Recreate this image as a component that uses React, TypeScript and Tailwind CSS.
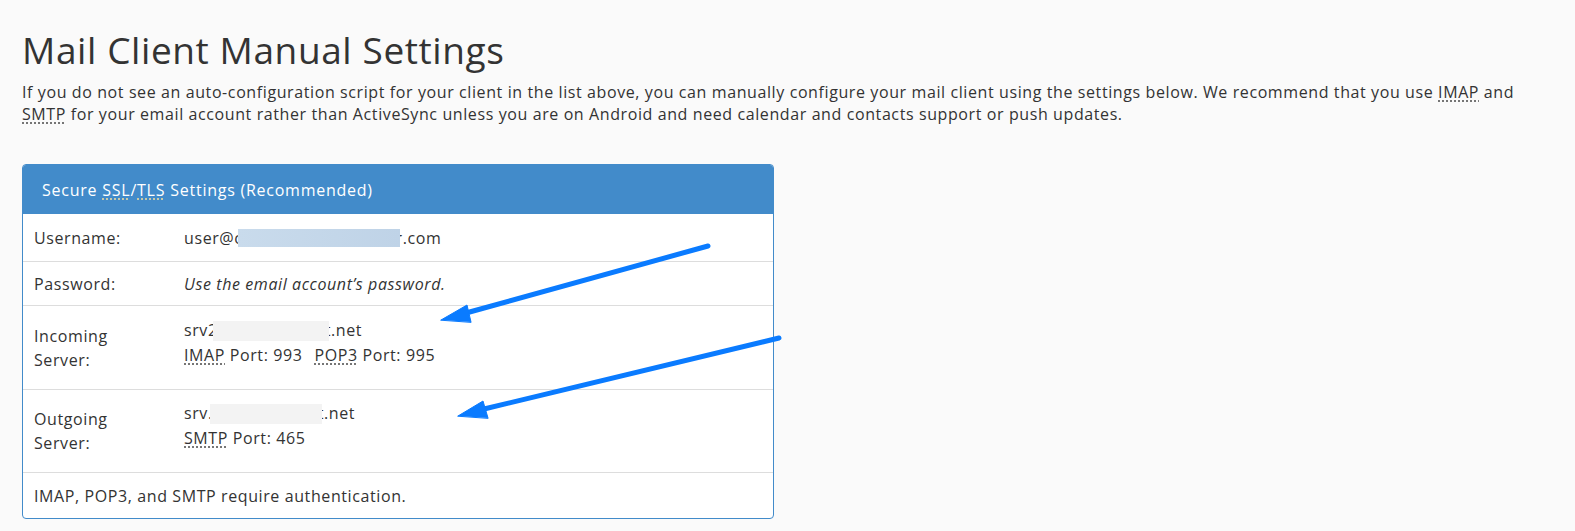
export default function App() {
  const abbr = "underline decoration-dotted decoration-[#555] underline-offset-[3px]";
  return (
    <div className="relative min-h-[531px] bg-[#fafafa] text-[#333] font-['Open_Sans',sans-serif] tracking-[0.6px] px-[22px] pt-[26px]">
      <h1 className="text-[37px] leading-[48px] font-normal text-[#333] tracking-[0.6px]">Mail Client Manual Settings</h1>
      <p className="text-[16px] leading-[22px] mt-[7px] pr-[20px]">
        If you do not see an auto-configuration script for your client in the list above, you can manually configure
        your mail client using the settings below. We recommend that you use <span className={abbr}>IMAP</span> and{" "}
        <span className={abbr}>SMTP</span> for your email account rather than ActiveSync unless you are on Android and
        need calendar and contacts support or push updates.
      </p>

      <div className="mt-[39px] w-[752px] rounded-[4px] border border-[#428bca] bg-white overflow-hidden text-[16px] leading-[24px]">
        <div className="h-[49px] bg-[#428bca] text-white flex items-center pl-[19px] tracking-[0.75px]">
          Secure{" "}
          <span className="ml-[5px] underline decoration-dotted decoration-[#e8d9a0] underline-offset-[3px]">SSL</span>/
          <span className="underline decoration-dotted decoration-[#e8d9a0] underline-offset-[3px]">TLS</span>
          <span className="ml-[5px]">Settings (Recommended)</span>
        </div>

        <div className="flex items-center h-[47px] pl-[11px]">
          <div className="w-[150px] shrink-0">Username:</div>
          <div className="flex items-center">
            <span>user@c</span>
            <span className="relative inline-block w-[162px] h-[18px] -ml-[5px] -mr-[4px] bg-gradient-to-r from-[#c9dbec] to-[#bfd3e7]" />
            <span>r.com</span>
          </div>
        </div>

        <div className="flex items-center h-[44px] pl-[11px] border-t border-[#ddd]">
          <div className="w-[150px] shrink-0">Password:</div>
          <div className="italic">Use the email account’s password.</div>
        </div>

        <div className="flex items-center h-[84px] pl-[11px] border-t border-[#ddd]">
          <div className="w-[150px] shrink-0">
            Incoming
            <br />
            Server:
          </div>
          <div className="self-start pt-[12px] leading-[25px]">
            <div className="flex items-center">
              <span>srv2</span>
              <span className="relative inline-block w-[116px] h-[20px] -ml-[5px] -mr-[4px] bg-[#f3f3f3]" />
              <span>t.net</span>
            </div>
            <div>
              <span className={abbr}>IMAP</span> Port: 993
              <span className="ml-[12px]">
                <span className={abbr}>POP3</span> Port: 995
              </span>
            </div>
          </div>
        </div>

        <div className="flex items-center h-[83px] pl-[11px] border-t border-[#ddd]">
          <div className="w-[150px] shrink-0">
            Outgoing
            <br />
            Server:
          </div>
          <div className="self-start pt-[11px] leading-[25px]">
            <div className="flex items-center">
              <span>srv.</span>
              <span className="relative inline-block w-[112px] h-[20px] -ml-[3px] -mr-[4px] bg-[#f3f3f3]" />
              <span>t.net</span>
            </div>
            <div>
              <span className={abbr}>SMTP</span> Port: 465
            </div>
          </div>
        </div>

        <div className="flex items-center h-[46px] pl-[11px] border-t border-[#ddd]">
          IMAP, POP3, and SMTP require authentication.
        </div>
      </div>

      {/* annotation arrows drawn over the screenshot */}
      <svg className="absolute left-0 top-0 pointer-events-none" width="1575" height="531" viewBox="0 0 1575 531">
        <g fill="#0a7bff" stroke="#0a7bff" strokeLinecap="round">
          <line x1="708" y1="246" x2="466" y2="313" strokeWidth="5" />
          <polygon points="441,320 467,305 471,322" strokeWidth="1" strokeLinejoin="round" />
          <line x1="779" y1="338" x2="484" y2="409" strokeWidth="5" />
          <polygon points="458,416 483,401 488,418" strokeWidth="1" strokeLinejoin="round" />
        </g>
      </svg>
    </div>
  );
}
